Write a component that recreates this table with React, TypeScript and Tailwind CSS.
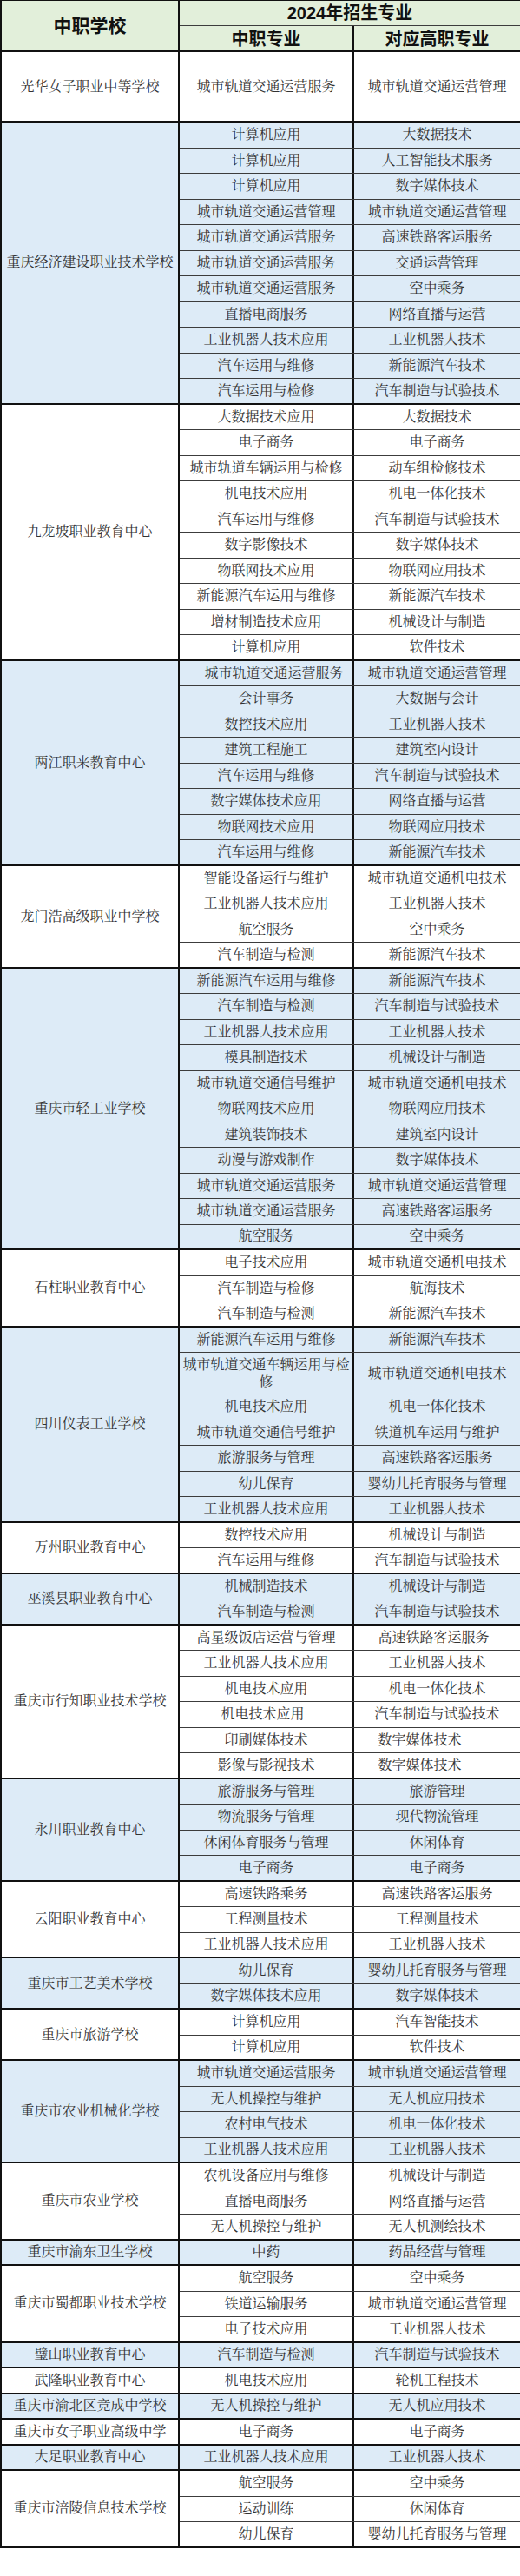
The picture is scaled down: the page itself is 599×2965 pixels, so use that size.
import React from "react";

type Row = {
  a: string;
  b: string;
  h?: string;
  hLast?: string;
  aCls?: string;
  bCls?: string;
};

type Group = {
  school: string;
  rows: Row[];
};

const r = (a: string, b: string, extra: Partial<Row> = {}): Row => ({ a, b, ...extra });

const groups: Group[] = [
  {
    school: "光华女子职业中等学校",
    rows: [r("城市轨道交通运营服务", "城市轨道交通运营管理", { hLast: "h-[79px]" })],
  },
  {
    school: "重庆经济建设职业技术学校",
    rows: [
      r("计算机应用", "大数据技术"),
      r("计算机应用", "人工智能技术服务"),
      r("计算机应用", "数字媒体技术"),
      r("城市轨道交通运营管理", "城市轨道交通运营管理"),
      r("城市轨道交通运营服务", "高速铁路客运服务"),
      r("城市轨道交通运营服务", "交通运营管理"),
      r("城市轨道交通运营服务", "空中乘务"),
      r("直播电商服务", "网络直播与运营"),
      r("工业机器人技术应用", "工业机器人技术"),
      r("汽车运用与维修", "新能源汽车技术"),
      r("汽车运用与检修", "汽车制造与试验技术"),
    ],
  },
  {
    school: "九龙坡职业教育中心",
    rows: [
      r("大数据技术应用", "大数据技术"),
      r("电子商务", "电子商务"),
      r("城市轨道车辆运用与检修", "动车组检修技术"),
      r("机电技术应用", "机电一体化技术"),
      r("汽车运用与维修", "汽车制造与试验技术"),
      r("数字影像技术", "数字媒体技术"),
      r("物联网技术应用", "物联网应用技术"),
      r("新能源汽车运用与维修", "新能源汽车技术"),
      r("增材制造技术应用", "机械设计与制造"),
      r("计算机应用", "软件技术"),
    ],
  },
  {
    school: "两江职来教育中心",
    rows: [
      r("城市轨道交通运营服务", "城市轨道交通运营管理", { aCls: "pl-[18px]" }),
      r("会计事务", "大数据与会计"),
      r("数控技术应用", "工业机器人技术"),
      r("建筑工程施工", "建筑室内设计"),
      r("汽车运用与维修", "汽车制造与试验技术"),
      r("数字媒体技术应用", "网络直播与运营"),
      r("物联网技术应用", "物联网应用技术"),
      r("汽车运用与维修", "新能源汽车技术"),
    ],
  },
  {
    school: "龙门浩高级职业中学校",
    rows: [
      r("智能设备运行与维护", "城市轨道交通机电技术"),
      r("工业机器人技术应用", "工业机器人技术"),
      r("航空服务", "空中乘务"),
      r("汽车制造与检测", "新能源汽车技术"),
    ],
  },
  {
    school: "重庆市轻工业学校",
    rows: [
      r("新能源汽车运用与维修", "新能源汽车技术"),
      r("汽车制造与检测", "汽车制造与试验技术"),
      r("工业机器人技术应用", "工业机器人技术"),
      r("模具制造技术", "机械设计与制造"),
      r("城市轨道交通信号维护", "城市轨道交通机电技术"),
      r("物联网技术应用", "物联网应用技术"),
      r("建筑装饰技术", "建筑室内设计"),
      r("动漫与游戏制作", "数字媒体技术"),
      r("城市轨道交通运营服务", "城市轨道交通运营管理"),
      r("城市轨道交通运营服务", "高速铁路客运服务"),
      r("航空服务", "空中乘务"),
    ],
  },
  {
    school: "石柱职业教育中心",
    rows: [
      r("电子技术应用", "城市轨道交通机电技术"),
      r("汽车制造与检修", "航海技术"),
      r("汽车制造与检测", "新能源汽车技术"),
    ],
  },
  {
    school: "四川仪表工业学校",
    rows: [
      r("新能源汽车运用与维修", "新能源汽车技术"),
      r("城市轨道交通车辆运用与检修", "城市轨道交通机电技术", { h: "h-[48px]" }),
      r("机电技术应用", "机电一体化技术"),
      r("城市轨道交通信号维护", "铁道机车运用与维护"),
      r("旅游服务与管理", "高速铁路客运服务"),
      r("幼儿保育", "婴幼儿托育服务与管理"),
      r("工业机器人技术应用", "工业机器人技术"),
    ],
  },
  {
    school: "万州职业教育中心",
    rows: [r("数控技术应用", "机械设计与制造"), r("汽车运用与维修", "汽车制造与试验技术")],
  },
  {
    school: "巫溪县职业教育中心",
    rows: [r("机械制造技术", "机械设计与制造"), r("汽车制造与检测", "汽车制造与试验技术")],
  },
  {
    school: "重庆市行知职业技术学校",
    rows: [
      r("高星级饭店运营与管理", "高速铁路客运服务", { bCls: "pr-[8px]" }),
      r("工业机器人技术应用", "工业机器人技术"),
      r("机电技术应用", "机电一体化技术"),
      r("机电技术应用", "汽车制造与试验技术", { aCls: "pr-[8px]" }),
      r("印刷媒体技术", "数字媒体技术", { bCls: "pr-[40px]" }),
      r("影像与影视技术", "数字媒体技术", { bCls: "pr-[40px]" }),
    ],
  },
  {
    school: "永川职业教育中心",
    rows: [
      r("旅游服务与管理", "旅游管理"),
      r("物流服务与管理", "现代物流管理"),
      r("休闲体育服务与管理", "休闲体育"),
      r("电子商务", "电子商务"),
    ],
  },
  {
    school: "云阳职业教育中心",
    rows: [
      r("高速铁路乘务", "高速铁路客运服务"),
      r("工程测量技术", "工程测量技术"),
      r("工业机器人技术应用", "工业机器人技术"),
    ],
  },
  {
    school: "重庆市工艺美术学校",
    rows: [r("幼儿保育", "婴幼儿托育服务与管理"), r("数字媒体技术应用", "数字媒体技术")],
  },
  {
    school: "重庆市旅游学校",
    rows: [r("计算机应用", "汽车智能技术"), r("计算机应用", "软件技术")],
  },
  {
    school: "重庆市农业机械化学校",
    rows: [
      r("城市轨道交通运营服务", "城市轨道交通运营管理"),
      r("无人机操控与维护", "无人机应用技术"),
      r("农村电气技术", "机电一体化技术"),
      r("工业机器人技术应用", "工业机器人技术"),
    ],
  },
  {
    school: "重庆市农业学校",
    rows: [
      r("农机设备应用与维修", "机械设计与制造"),
      r("直播电商服务", "网络直播与运营"),
      r("无人机操控与维护", "无人机测绘技术"),
    ],
  },
  { school: "重庆市渝东卫生学校", rows: [r("中药", "药品经营与管理")] },
  {
    school: "重庆市蜀都职业技术学校",
    rows: [
      r("航空服务", "空中乘务"),
      r("铁道运输服务", "城市轨道交通运营管理"),
      r("电子技术应用", "工业机器人技术"),
    ],
  },
  { school: "璧山职业教育中心", rows: [r("汽车制造与检测", "汽车制造与试验技术")] },
  { school: "武隆职业教育中心", rows: [r("机电技术应用", "轮机工程技术")] },
  { school: "重庆市渝北区竞成中学校", rows: [r("无人机操控与维护", "无人机应用技术")] },
  { school: "重庆市女子职业高级中学", rows: [r("电子商务", "电子商务")] },
  { school: "大足职业教育中心", rows: [r("工业机器人技术应用", "工业机器人技术")] },
  {
    school: "重庆市涪陵信息技术学校",
    rows: [
      r("航空服务", "空中乘务"),
      r("运动训练", "休闲体育"),
      r("幼儿保育", "婴幼儿托育服务与管理"),
    ],
  },
];

const SchoolGroup: React.FC<{ group: Group; blue: boolean }> = ({ group, blue }) => {
  const last = group.rows.length - 1;
  return (
    <div className={`flex border-b-2 border-[#111] ${blue ? "bg-[#ddebf7]" : "bg-white"}`}>
      <div className="w-[205px] shrink-0 border-r-2 border-[#111] flex items-center justify-center text-center px-1">
        {group.school}
      </div>
      <div className="flex-1 flex flex-col">
        {group.rows.map((row, i) => (
          <div
            key={i}
            className={`flex ${
              i === last ? row.hLast ?? "h-[27.5px]" : `${row.h ?? "h-[29.5px]"} border-b border-[#3c3c3c]`
            }`}
          >
            <div
              className={`w-[201px] shrink-0 border-r-2 border-[#111] flex items-center justify-center text-center leading-[20px] ${
                row.aCls ?? ""
              }`}
            >
              {row.a}
            </div>
            <div className={`flex-1 flex items-center justify-center text-center ${row.bCls ?? ""}`}>
              {row.b}
            </div>
          </div>
        ))}
      </div>
    </div>
  );
};

export default function App() {
  return (
    <div className="w-[599px] bg-white">
      <div className="border-l-2 border-[#111] text-[16px] text-[#333] font-['Liberation_Serif','Noto_Serif_CJK_SC','Noto_Sans_CJK_SC',serif]">
        {/* header */}
        <div className="flex h-[60px] border-t border-b-2 border-[#111] bg-[#e2efda] text-[#111] font-bold font-['Liberation_Sans','Noto_Sans_CJK_SC',sans-serif]">
          <div className="w-[205px] shrink-0 border-r-2 border-[#111] flex items-center justify-center text-[21px]">
            中职学校
          </div>
          <div className="flex-1 flex flex-col">
            <div className="h-[29px] border-b border-[#3c3c3c] flex items-center justify-center text-[20px]">
              2024年招生专业
            </div>
            <div className="flex-1 flex text-[20px]">
              <div className="w-[201px] shrink-0 border-r-2 border-[#111] flex items-center justify-center">
                中职专业
              </div>
              <div className="flex-1 flex items-center justify-center">对应高职专业</div>
            </div>
          </div>
        </div>

        {groups.map((g, i) => (
          <SchoolGroup key={g.school} group={g} blue={i % 2 === 1} />
        ))}
      </div>
    </div>
  );
}
